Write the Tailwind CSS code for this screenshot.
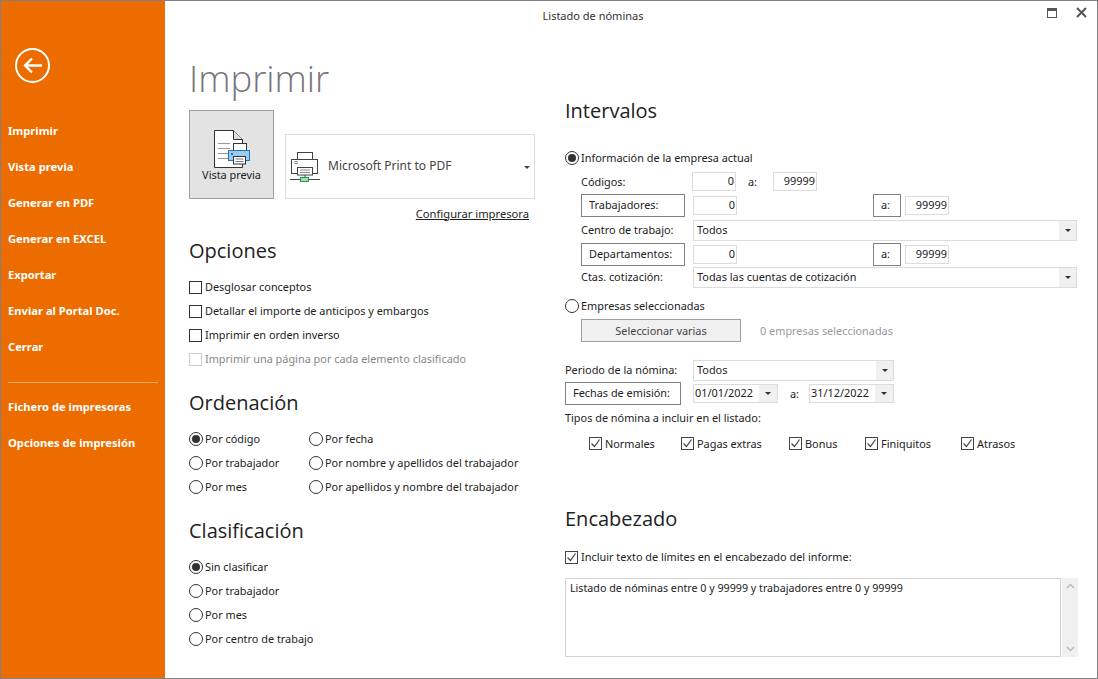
<!DOCTYPE html>
<html lang="es">
<head>
  <meta charset="UTF-8">
  <title>Listado de nóminas</title>
  <script src="https://cdn.jsdelivr.net/npm/@tailwindcss/browser@4"></script>
</head>
<body class="bg-white">
  <div class="w-[1098px] h-[679px] flex border border-[#808080] overflow-hidden font-['Noto_Sans',sans-serif] text-[10.9px] text-[#222]">

    <!-- Sidebar -->
    <aside class="w-[164px] shrink-0 bg-[#ed6c00] flex flex-col text-white font-bold text-[11.2px]">
      <svg class="mt-[46px] ml-[13px]" width="37" height="37" viewBox="0 0 37 37" fill="none" stroke="white">
        <circle cx="18.5" cy="18.5" r="16.5" stroke-width="2"/>
        <path d="M28 18.5H11M18 11.5l-7 7 7 7" stroke-width="2.4"/>
      </svg>
      <nav class="mt-[29px] pl-[7px] flex flex-col">
        <a class="h-[36px] flex items-center">Imprimir</a>
        <a class="h-[36px] flex items-center">Vista previa</a>
        <a class="h-[36px] flex items-center">Generar en PDF</a>
        <a class="h-[36px] flex items-center">Generar en EXCEL</a>
        <a class="h-[36px] flex items-center">Exportar</a>
        <a class="h-[36px] flex items-center">Enviar al Portal Doc.</a>
        <a class="h-[36px] flex items-center">Cerrar</a>
      </nav>
      <div class="ml-[7px] w-[150px] h-px bg-[#f4a565] mt-[17px]"></div>
      <nav class="mt-[6px] pl-[7px] flex flex-col">
        <a class="h-[36px] flex items-center">Fichero de impresoras</a>
        <a class="h-[36px] flex items-center">Opciones de impresión</a>
      </nav>
    </aside>

    <main class="flex-1 flex flex-col">
      <!-- Title bar -->
      <header class="h-[31px] shrink-0 flex items-center relative">
        <div class="w-full text-center text-[11px] text-[#333] ml-[-38px] mt-[-1px]">Listado de nóminas</div>
        <svg class="absolute left-[882px] top-[7px]" width="10" height="10" viewBox="0 0 10 10" fill="none" stroke="#555">
          <rect x="0.5" y="0.5" width="9" height="9"/><path d="M0 2h10" stroke-width="2"/>
        </svg>
        <svg class="absolute left-[911px] top-[6px]" width="11" height="11" viewBox="0 0 11 11" fill="none" stroke="#555" stroke-width="2">
          <path d="M1 1l9 9M10 1l-9 9"/>
        </svg>
      </header>

      <div class="flex pl-[24px]">
        <!-- Left column -->
        <section class="w-[346px] shrink-0 mr-[30px]">
          <h1 class="mt-[18px] h-[56px] flex items-center font-['Open_Sans',sans-serif] font-light text-[36.5px] text-[#77757d]">Imprimir</h1>

          <div class="mt-[4px] flex items-end">
            <button class="w-[85px] h-[89px] bg-[#e3e3e3] border border-[#a0a0a0] flex flex-col items-center pt-[19px] text-[#222]">
              <svg width="36" height="38" viewBox="0 0 36 38" fill="none" stroke="#333">
                <path d="M.5.5h19l9 9v28H.5z" fill="white"/>
                <path d="M19.5.5v9h9" fill="#ddd"/>
                <path d="M4 13.5h12M4 18.5h12M4 23.5h10M4 28.5h10" stroke="#999"/>
                <rect x="19.5" y="13.5" width="13" height="7" fill="white"/>
                <rect x="14.5" y="20.5" width="21" height="10" fill="#9ccbee" stroke="#1f78bd"/>
                <rect x="17" y="23" width="2" height="2" fill="#1f78bd" stroke="none"/>
                <rect x="19.5" y="26.5" width="12" height="7.500" fill="white"/>
                <path d="M21.500 29h8M21.500 31.500h8" stroke="#777"/>
              </svg>
              <span class="mt-[-1px]">Vista previa</span>
            </button>
            <div class="ml-[11px] w-[250px] h-[65px] border border-[#dcdcdc] flex items-center relative pl-[4px] text-[12px] text-[#444]">
              <svg width="30" height="32" viewBox="0 0 30 32" fill="none" stroke="#444" class="mt-[1px]">
                <rect x="7.500" y="1.500" width="15" height="7" fill="white"/>
                <rect x="1.500" y="8.500" width="26" height="14" fill="white"/>
                <rect x="5" y="10.500" width="2" height="2" stroke="#888"/>
                <rect x="7.500" y="16.500" width="15" height="7.500" fill="white"/>
                <path d="M10 19h10M10 21.500h10" stroke="#888"/>
                <path d="M15 24v3M0 28.500h30"/>
                <rect x="10.500" y="26.500" width="8" height="4" fill="#9fe0b0" stroke="#1e9e4a"/>
              </svg>
              <span class="ml-[8px] mt-[-1px]">Microsoft Print to PDF</span>
              <span class="absolute right-[4px] top-[31px] w-0 h-0 border-x-[3px] border-x-transparent border-t-[3px] border-t-[#444]"></span>
            </div>
          </div>

          <div class="mt-[7px] h-[16px] pr-[6px] flex items-center justify-end">
            <a class="underline text-[#222] text-[11.2px]">Configurar impresora</a>
          </div>

          <h2 class="mt-[15px] h-[28px] flex items-center font-['Open_Sans',sans-serif] text-[20px] text-[#222]">Opciones</h2>
          <div class="mt-[10px] flex flex-col">
            <label class="h-[24px] flex items-center gap-[3px]"><span class="w-[13px] h-[13px] border border-[#333]"></span>Desglosar conceptos</label>
            <label class="h-[24px] flex items-center gap-[3px]"><span class="w-[13px] h-[13px] border border-[#333]"></span>Detallar el importe de anticipos y embargos</label>
            <label class="h-[24px] flex items-center gap-[3px]"><span class="w-[13px] h-[13px] border border-[#333]"></span>Imprimir en orden inverso</label>
            <label class="h-[24px] flex items-center gap-[3px] text-[#888]"><span class="w-[13px] h-[13px] border border-[#ccc]"></span>Imprimir una página por cada elemento clasificado</label>
          </div>

          <h2 class="mt-[18px] h-[28px] flex items-center font-['Open_Sans',sans-serif] text-[20px] text-[#222]">Ordenación</h2>
          <div class="mt-[10px] grid grid-cols-[120px_1fr]">
            <label class="h-[24px] flex items-center gap-[2px]"><span class="w-[14px] h-[14px] rounded-full border border-[#333] flex items-center justify-center"><span class="w-[8px] h-[8px] rounded-full bg-[#333]"></span></span>Por código</label>
            <label class="h-[24px] flex items-center gap-[2px]"><span class="w-[14px] h-[14px] rounded-full border border-[#333]"></span>Por fecha</label>
            <label class="h-[24px] flex items-center gap-[2px]"><span class="w-[14px] h-[14px] rounded-full border border-[#333]"></span>Por trabajador</label>
            <label class="h-[24px] flex items-center gap-[2px]"><span class="w-[14px] h-[14px] rounded-full border border-[#333]"></span>Por nombre y apellidos del trabajador</label>
            <label class="h-[24px] flex items-center gap-[2px]"><span class="w-[14px] h-[14px] rounded-full border border-[#333]"></span>Por mes</label>
            <label class="h-[24px] flex items-center gap-[2px]"><span class="w-[14px] h-[14px] rounded-full border border-[#333]"></span>Por apellidos y nombre del trabajador</label>
          </div>

          <h2 class="mt-[18px] h-[28px] flex items-center font-['Open_Sans',sans-serif] text-[20px] text-[#222]">Clasificación</h2>
          <div class="mt-[10px] flex flex-col">
            <label class="h-[24px] flex items-center gap-[2px]"><span class="w-[14px] h-[14px] rounded-full border border-[#333] flex items-center justify-center"><span class="w-[8px] h-[8px] rounded-full bg-[#333]"></span></span>Sin clasificar</label>
            <label class="h-[24px] flex items-center gap-[2px]"><span class="w-[14px] h-[14px] rounded-full border border-[#333]"></span>Por trabajador</label>
            <label class="h-[24px] flex items-center gap-[2px]"><span class="w-[14px] h-[14px] rounded-full border border-[#333]"></span>Por mes</label>
            <label class="h-[24px] flex items-center gap-[2px]"><span class="w-[14px] h-[14px] rounded-full border border-[#333]"></span>Por centro de trabajo</label>
          </div>
        </section>

        <!-- Right column -->
        <section class="w-[513px] shrink-0">
          <h2 class="mt-[65px] h-[28px] flex items-center font-['Open_Sans',sans-serif] text-[20px] text-[#222]">Intervalos</h2>

          <label class="mt-[23px] h-[20px] flex items-center gap-[2px]"><span class="w-[14px] h-[14px] rounded-full border border-[#333] flex items-center justify-center"><span class="w-[8px] h-[8px] rounded-full bg-[#333]"></span></span>Información de la empresa actual</label>

          <div class="mt-[4px] h-[19px] pl-[16px] flex items-center">
            <span class="w-[111px] mt-[2px]">Códigos:</span>
            <span class="w-[44px] h-[19px] border border-[#dcdcdc] flex items-center justify-end pr-[1px]">0</span>
            <span class="ml-[12px] w-[25px] mt-[2px]">a:</span>
            <span class="w-[44px] h-[19px] border border-[#dcdcdc] flex items-center justify-end pr-[1px]">99999</span>
          </div>

          <div class="mt-[3px] h-[23px] pl-[16px] flex items-center">
            <span class="w-[104px] h-[23px] border border-[#808080] flex items-center pl-[7px]">Trabajadores:</span>
            <span class="ml-[8px] w-[44px] h-[19px] border border-[#dcdcdc] flex items-center justify-end pr-[1px]">0</span>
            <span class="ml-[136px] w-[28px] h-[23px] border border-[#808080] flex items-center pl-[7px]">a:</span>
            <span class="ml-[4px] w-[44px] h-[19px] border border-[#dcdcdc] flex items-center justify-end pr-[1px]">99999</span>
          </div>

          <div class="mt-[3px] h-[21px] pl-[16px] flex items-center">
            <span class="w-[112px]">Centro de trabajo:</span>
            <span class="w-[384px] h-[21px] border border-[#dcdcdc] flex items-center pl-[3px] relative">Todos
              <span class="absolute right-0 top-0 w-[17px] h-[19px] bg-[#f0f0f0] flex items-center justify-center"><span class="w-0 h-0 border-x-[3px] border-x-transparent border-t-[3px] border-t-[#333]"></span></span>
            </span>
          </div>

          <div class="mt-[2px] h-[23px] pl-[16px] flex items-center">
            <span class="w-[104px] h-[23px] border border-[#808080] flex items-center pl-[7px]">Departamentos:</span>
            <span class="ml-[8px] w-[44px] h-[19px] border border-[#dcdcdc] flex items-center justify-end pr-[1px]">0</span>
            <span class="ml-[136px] w-[28px] h-[23px] border border-[#808080] flex items-center pl-[7px]">a:</span>
            <span class="ml-[4px] w-[44px] h-[19px] border border-[#dcdcdc] flex items-center justify-end pr-[1px]">99999</span>
          </div>

          <div class="mt-[1px] h-[21px] pl-[16px] flex items-center">
            <span class="w-[112px]">Ctas. cotización:</span>
            <span class="w-[384px] h-[21px] border border-[#dcdcdc] flex items-center pl-[3px] relative">Todas las cuentas de cotización
              <span class="absolute right-0 top-0 w-[17px] h-[19px] bg-[#f0f0f0] flex items-center justify-center"><span class="w-0 h-0 border-x-[3px] border-x-transparent border-t-[3px] border-t-[#333]"></span></span>
            </span>
          </div>

          <label class="mt-[8px] h-[20px] flex items-center gap-[2px]"><span class="w-[14px] h-[14px] rounded-full border border-[#333]"></span>Empresas seleccionadas</label>

          <div class="mt-[3px] h-[23px] pl-[16px] flex items-center">
            <button class="w-[160px] h-[23px] bg-[#f0f0f0] border border-[#a0a0a0] text-[#444] pt-[1px]">Seleccionar varias</button>
            <span class="ml-[19px] text-[#999] mt-[2px]">0 empresas seleccionadas</span>
          </div>

          <div class="mt-[18px] h-[21px] flex items-center">
            <span class="w-[128px]">Periodo de la nómina:</span>
            <span class="w-[201px] h-[21px] border border-[#dcdcdc] flex items-center pl-[3px] relative">Todos
              <span class="absolute right-0 top-0 w-[17px] h-[19px] bg-[#f0f0f0] flex items-center justify-center"><span class="w-0 h-0 border-x-[3px] border-x-transparent border-t-[3px] border-t-[#333]"></span></span>
            </span>
          </div>

          <div class="mt-[1px] h-[23px] flex items-center">
            <span class="w-[116px] h-[23px] border border-[#808080] flex items-center pl-[7px]">Fechas de emisión:</span>
            <span class="ml-[12px] w-[85px] h-[19px] border border-[#dcdcdc] flex items-center pl-[1px] relative">01/01/2022
              <span class="absolute right-0 top-0 w-[18px] h-[17px] bg-[#f0f0f0] flex items-center justify-center"><span class="w-0 h-0 border-x-[3px] border-x-transparent border-t-[3px] border-t-[#333]"></span></span>
            </span>
            <span class="ml-[12px] w-[19px] mt-[2px]">a:</span>
            <span class="w-[85px] h-[19px] border border-[#dcdcdc] flex items-center pl-[1px] relative">31/12/2022
              <span class="absolute right-0 top-0 w-[18px] h-[17px] bg-[#f0f0f0] flex items-center justify-center"><span class="w-0 h-0 border-x-[3px] border-x-transparent border-t-[3px] border-t-[#333]"></span></span>
            </span>
          </div>

          <div class="mt-[5px] h-[16px] flex items-center">Tipos de nómina a incluir en el listado:</div>

          <div class="mt-[8px] h-[20px] pl-[24px] flex items-center">
            <label class="w-[92px] flex items-center gap-[3px]"><span class="w-[13px] h-[13px] border border-[#444] flex items-center justify-center"><svg width="11" height="11" viewBox="0 0 11 11" fill="none" stroke="#444" stroke-width="1.200"><path d="M1.500 5.500l3 3 5-7"/></svg></span>Normales</label>
            <label class="w-[108px] flex items-center gap-[3px]"><span class="w-[13px] h-[13px] border border-[#444] flex items-center justify-center"><svg width="11" height="11" viewBox="0 0 11 11" fill="none" stroke="#444" stroke-width="1.200"><path d="M1.500 5.500l3 3 5-7"/></svg></span>Pagas extras</label>
            <label class="w-[76px] flex items-center gap-[3px]"><span class="w-[13px] h-[13px] border border-[#444] flex items-center justify-center"><svg width="11" height="11" viewBox="0 0 11 11" fill="none" stroke="#444" stroke-width="1.200"><path d="M1.500 5.500l3 3 5-7"/></svg></span>Bonus</label>
            <label class="w-[96px] flex items-center gap-[3px]"><span class="w-[13px] h-[13px] border border-[#444] flex items-center justify-center"><svg width="11" height="11" viewBox="0 0 11 11" fill="none" stroke="#444" stroke-width="1.200"><path d="M1.500 5.500l3 3 5-7"/></svg></span>Finiquitos</label>
            <label class="flex items-center gap-[3px]"><span class="w-[13px] h-[13px] border border-[#444] flex items-center justify-center"><svg width="11" height="11" viewBox="0 0 11 11" fill="none" stroke="#444" stroke-width="1.200"><path d="M1.500 5.500l3 3 5-7"/></svg></span>Atrasos</label>
          </div>

          <h2 class="mt-[51px] h-[28px] flex items-center font-['Open_Sans',sans-serif] text-[20px] text-[#222]">Encabezado</h2>

          <label class="mt-[14px] h-[20px] flex items-center gap-[3px]"><span class="w-[13px] h-[13px] border border-[#444] flex items-center justify-center"><svg width="11" height="11" viewBox="0 0 11 11" fill="none" stroke="#444" stroke-width="1.200"><path d="M1.500 5.500l3 3 5-7"/></svg></span>Incluir texto de límites en el encabezado del informe:</label>

          <div class="mt-[11px] h-[79px] flex">
            <div class="w-[496px] h-full border border-[#d4d4d4] px-[4px] pt-[1px] text-[10.7px]">Listado de nóminas entre 0 y 99999 y trabajadores entre 0 y 99999</div>
            <div class="ml-[1px] w-[16px] h-full bg-[#f0f0f0] flex flex-col items-center justify-between py-[5px]">
              <svg width="9" height="6" viewBox="0 0 9 6" fill="none" stroke="#bbb" stroke-width="1.500"><path d="M1 5l3.500-3.500L8 5"/></svg>
              <svg width="9" height="6" viewBox="0 0 9 6" fill="none" stroke="#bbb" stroke-width="1.500"><path d="M1 1l3.500 3.500L8 1"/></svg>
            </div>
          </div>
        </section>
      </div>
    </main>
  </div>
</body>
</html>
